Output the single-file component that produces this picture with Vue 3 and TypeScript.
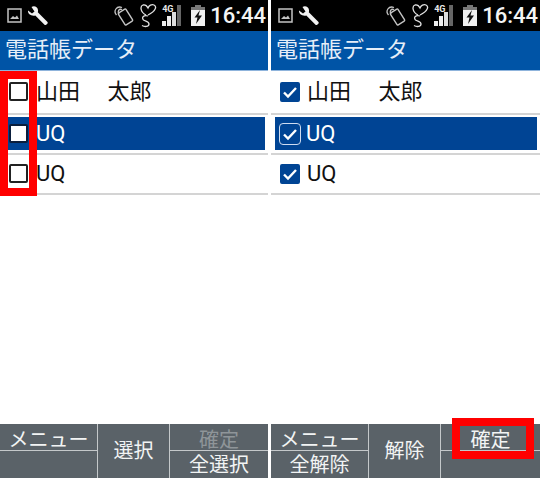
<template>
  <div class="screen">
    <section v-for="p in phones" :key="p.id" class="phone" :class="p.id">
      <header class="status">
        <svg class="ic-pic" width="15" height="15" viewBox="0 0 15 15">
          <rect x="1" y="1" width="13" height="13" fill="none" stroke="#c4c4c4" stroke-width="1.500" />
          <path d="M3 11l3-3 2 1.500 2-2 2 3.500z" fill="#c4c4c4" />
        </svg>
        <svg class="ic-wrench" width="22" height="22" viewBox="0 0 22 22">
          <path d="M1 5.500l4 3 2.500-2-3-4.500C7 .5 10.500 1.500 11 5c.2 1 0 1.800-.2 2.300L20.500 17c1 1.200-1.800 4-3 2.800L8.300 10.500C4.500 11.500.5 9 1 5.500z" fill="#f2f2f2" />
        </svg>
        <span class="spacer"></span>
        <svg class="ic-nfc" width="22" height="22" viewBox="0 0 22 22" fill="none" stroke="#c4c4c4">
          <rect x="8" y="5" width="9" height="14" rx="1" transform="rotate(-32 12.500 12)" stroke-width="1.400" />
          <path d="M3.500 10C0 6 3.500 .5 9 2.500M6 9C4 6.500 6 3.500 9 4.500" stroke-width="1.300" />
        </svg>
        <svg class="ic-heart" width="18" height="26" viewBox="0 0 18 26" fill="none" stroke="#e0e0e0" stroke-width="1.300">
          <path d="M7 12C1 9 1 3 4 2c2.500-.6 4 1 5 3 1-2.500 3.500-4 6-3 3 1.500 2 6-6 10" />
          <path d="M9 13c-4-1.500-7 1.500-4.500 4 2 1.500 5.500 1.500 5.500 4 0 3-4.500 3-7 1.500" />
        </svg>
        <div class="signal">
          <span class="g4">4G</span>
          <i class="b b1"></i><i class="b b2"></i><i class="b b3"></i><i class="b b4"></i>
        </div>
        <svg class="ic-batt" width="14" height="21" viewBox="0 0 14 21">
          <rect x="4" y="0" width="6" height="2" fill="#777" />
          <rect x="0" y="2" width="14" height="19" fill="#f0f0f0" />
          <rect x="0" y="2" width="14" height="3" fill="#777" />
          <path d="M9 5L3.500 12.500h3L5 19l6-8.500H7.500z" fill="#111" />
        </svg>
        <span class="time">16:44</span>
      </header>

      <h1 class="title">電話帳データ</h1>

      <ul class="list">
        <li v-for="(c, i) in contacts" :key="i" class="row" :class="{ first: i === 0 }">
          <div class="row-inner" :class="{ active: i === 1 }">
            <span class="box" :class="{ on: p.checked }">
              <svg v-if="p.checked" width="16" height="14" viewBox="0 0 16 14">
                <path d="M2 7.500l4 4L14 3" fill="none" stroke="#fff" stroke-width="2.400" />
              </svg>
            </span>
            <span class="name">{{ c }}</span>
          </div>
        </li>
      </ul>

      <footer class="softkeys">
        <div class="col side-l">
          <button type="button" class="key">メニュー</button>
          <button type="button" class="key">{{ p.bottomLeft }}</button>
        </div>
        <button type="button" class="key mid">{{ p.center }}</button>
        <div class="col side-r">
          <button type="button" class="key" :class="{ dim: !p.checked }">確定</button>
          <button type="button" class="key">{{ p.bottomRight }}</button>
        </div>
      </footer>

      <div class="mark" :class="p.checked ? 'mark-ok' : 'mark-boxes'"></div>
    </section>
  </div>
</template>

<script setup lang="ts">
const contacts = ['山田　 太郎', 'UQ', 'UQ']

const phones = [
  { id: 'before', checked: false, center: '選択', bottomLeft: '', bottomRight: '全選択' },
  { id: 'after', checked: true, center: '解除', bottomLeft: '全解除', bottomRight: '' },
]
</script>

<style>
html, body { margin: 0; background: #fff; }
</style>

<style scoped>
.screen {
  display: flex;
  justify-content: space-between;
  width: 540px;
  height: 478px;
  overflow: hidden;
  font-family: Roboto, "Noto Sans CJK JP", sans-serif;
}
.phone {
  position: relative;
  display: flex;
  flex-direction: column;
  height: 478px;
  background: #fff;
}
.before { width: 268px; }
.after { width: 269px; }

.status {
  display: flex;
  align-items: center;
  height: 31px;
  padding: 0 2px 0 7px;
  background: #000;
  box-sizing: border-box;
}
.ic-pic { margin-right: 5px; }
.spacer { flex: 1; }
.ic-nfc { margin-right: 4px; }
.ic-heart { margin-right: 5px; }
.signal {
  position: relative;
  display: flex;
  align-items: flex-end;
  gap: 1px;
  width: 20px;
  height: 21px;
  margin-right: 9px;
}
.g4 {
  position: absolute;
  left: 0;
  top: -1px;
  font-size: 9px;
  font-weight: 700;
  color: #e8e8e8;
  line-height: 10px;
}
.b { display: block; width: 4px; background: #eee; }
.b1 { height: 5px; }
.b2 { height: 10px; }
.b3 { height: 14px; background: #ddd; }
.b4 { height: 21px; background: #666; }
.ic-batt { margin-right: 5px; }
.time {
  font-size: 22px;
  font-weight: 500;
  color: #f4f4f4;
  line-height: 30px;
}

.title {
  margin: 0;
  height: 39px;
  padding-left: 5px;
  background: #0054a6;
  border-bottom: 1px solid #8fb4dc;
  font-size: 22px;
  font-weight: 400;
  line-height: 38px;
  color: #e6eef8;
}

.list {
  flex: 1;
  margin: 0;
  padding: 0;
  list-style: none;
}
.row {
  height: 40px;
  padding: 2px 3px 3px 4px;
  box-sizing: border-box;
  border-bottom: 2px solid #d4d4d4;
}
.row.first { height: 44px; padding-top: 4px; }
.row-inner {
  display: flex;
  align-items: center;
  height: 33px;
  padding-left: 5px;
  color: #111;
}
.row-inner.active {
  background: #004494;
  color: #fff;
}
.box {
  display: flex;
  align-items: center;
  justify-content: center;
  width: 19px;
  height: 19px;
  margin-right: 9px;
  box-sizing: border-box;
  border: 2px solid #222;
  border-radius: 2px;
  background: #fff;
  flex: none;
}
.box.on {
  width: 20px;
  height: 20px;
  margin-right: 8px;
  background: #004494;
  border-color: #004494;
}
.active .box.on {
  border: 1.500px solid #cfdcf0;
  border-radius: 4px;
  width: 22px;
  height: 22px;
  margin: 0 6px 0 -1px;
}
.active .box:not(.on) { border-color: #0a1e3c; }
.name {
  margin-left: -1px;
  font-size: 22px;
  line-height: 30px;
  white-space: pre;
}

.softkeys {
  display: flex;
  height: 54px;
  background: #5a6268;
}
.col {
  display: flex;
  flex-direction: column;
}
.side-l { width: 97px; flex: none; }
.side-r { flex: 1; }
.key {
  padding: 0;
  border: 0;
  background: transparent;
  font-family: inherit;
  font-size: 20px;
  line-height: 26px;
  color: #f2f4f4;
}
.col .key {
  flex: none;
  height: 27px;
}
.col .key:first-child {
  padding-top: 3px;
  border-bottom: 1px solid #c4c8ca;
}
.mid {
  flex: none;
  width: 73px;
  border-left: 1px solid #c4c8ca;
  border-right: 1px solid #c4c8ca;
}
.dim { color: #8f9599; }

.mark {
  position: absolute;
  box-sizing: border-box;
  border: 8px solid #f00;
}
.mark-boxes {
  left: 0;
  top: 71px;
  width: 37px;
  height: 125px;
}
.mark-ok {
  left: 181px;
  top: 418px;
  width: 82px;
  height: 41px;
}
</style>
